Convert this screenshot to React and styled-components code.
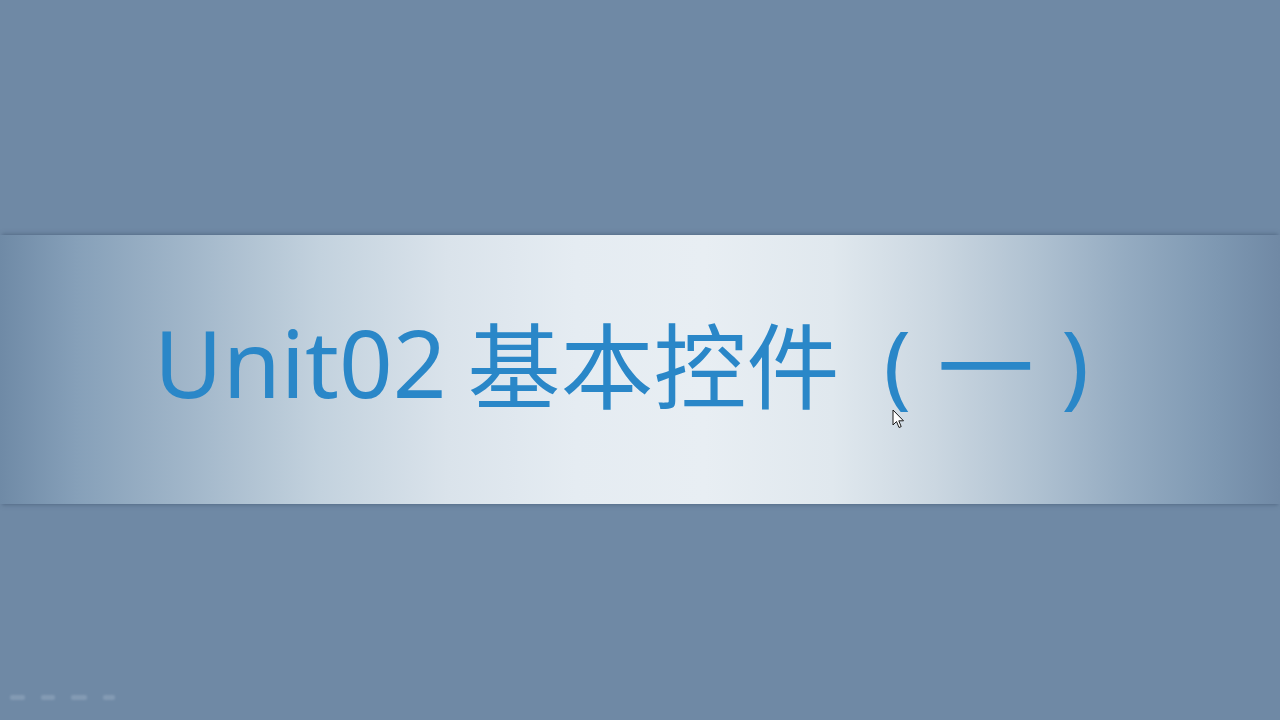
import React from 'react'
import styled, { createGlobalStyle } from 'styled-components'

const GlobalStyle = createGlobalStyle`
  html, body {
    margin: 0;
    padding: 0;
    background: #6f8aa6;
  }
  body {
    font-family: "Noto Sans", "Noto Sans CJK SC", sans-serif;
  }
`

const Slide = styled.div`
  width: 1280px;
  height: 720px;
  position: relative;
  overflow: hidden;
  background: #6f89a5;
  display: flex;
  flex-direction: column;
  padding-top: 235px;
  box-sizing: border-box;
`

const Band = styled.div`
  height: 269px;
  display: flex;
  align-items: center;
  padding-left: 154px;
  box-sizing: border-box;
  background: linear-gradient(
    to right,
    #6f8aa6 0%,
    #86a0b9 6%,
    #a2b7ca 15%,
    #c3d2de 25%,
    #dae3eb 35%,
    #e5ecf2 45%,
    #e8eef3 55%,
    #e0e8ee 65%,
    #cbd7e1 73%,
    #afc1d1 81%,
    #94abc1 88%,
    #7e98b2 95%,
    #7089a5 100%
  );
  box-shadow: 0 -3px 4px -2px rgba(60, 80, 105, 0.5), 0 3px 4px -2px rgba(60, 80, 105, 0.5);
`

const Title = styled.h1`
  margin: 0;
  margin-top: -12px;
  font-weight: 400;
  font-size: 93px;
  line-height: 1;
  color: #2a87c8;
  white-space: nowrap;
`

const Latin = styled.span`
  font-family: "Noto Sans", sans-serif;
  font-size: 94px;
  vertical-align: 4px;
  margin-right: 21px;
`

const Cjk = styled.span`
  font-family: "Noto Sans CJK SC", sans-serif;
`

const Paren = styled.span`
  display: inline-block;
  font-family: "Noto Sans", sans-serif;
  font-size: 92px;
  vertical-align: 4px;
  margin-left: ${p => p.gap}px;
`

const Dash = styled.span`
  display: inline-block;
  font-family: "Noto Sans CJK SC", sans-serif;
  margin-left: ${p => p.gap}px;
  transform: scaleX(1.04);
`

const Pointer = styled.svg`
  position: absolute;
  left: 892px;
  top: 409px;
`

const Controls = styled.div`
  position: absolute;
  left: 10px;
  bottom: 20px;
  display: flex;
  align-items: center;
  gap: 16px;
  opacity: 0.3;
  filter: blur(1px);
`

const Ctrl = styled.div`
  width: ${p => p.w}px;
  height: 5px;
  background: #b3c4d6;
  border-radius: 2px;
`

export default function App() {
  return (
    <>
      <GlobalStyle />
      <Slide>
        <Band>
          <Title>
            <Latin>Unit02</Latin>
            <Cjk>基本控件</Cjk>
            <Paren gap={44}>(</Paren>
            <Dash gap={28}>一</Dash>
            <Paren gap={29}>)</Paren>
          </Title>
        </Band>
        <Pointer width="13" height="20" viewBox="0 0 13 20">
          <path d="M1 1 L1 16 L4.5 12.5 L7 18.5 L9.2 17.6 L6.8 11.8 L11.5 11.8 Z" fill="#ffffff" stroke="#1a1a1a" strokeWidth="1" />
        </Pointer>
        <Controls>
          <Ctrl w={15} />
          <Ctrl w={14} />
          <Ctrl w={16} />
          <Ctrl w={12} />
        </Controls>
      </Slide>
    </>
  )
}
